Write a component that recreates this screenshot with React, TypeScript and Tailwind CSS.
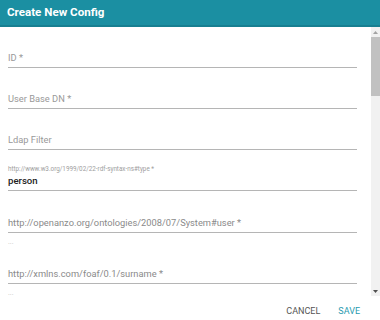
import React from 'react';

const ScrollBar: React.FC = () => (
  <div className="w-[9px] flex flex-col bg-[#f1f1f1]">
    <div className="h-[10px] flex items-center justify-center bg-[#f1f1f1]">
      <svg width="5" height="3" viewBox="0 0 5 3">
        <path d="M0 3 L2.5 0 L5 3 Z" fill="#a3a3a3" />
      </svg>
    </div>
    <div className="h-[59px] bg-[#c1c1c1]" />
    <div className="flex-1" />
    <div className="h-[10px] flex items-center justify-center">
      <svg width="5" height="3" viewBox="0 0 5 3">
        <path d="M0 0 L2.5 3 L5 0 Z" fill="#505050" />
      </svg>
    </div>
  </div>
);

const App: React.FC = () => {
  return (
    <div className="w-[380px] h-[320px] bg-white flex flex-col overflow-hidden font-['Roboto',sans-serif]">
      {/* Dialog header */}
      <div className="h-[27px] shrink-0 bg-[#1b8fa2] border-b-2 border-[#177f91] px-[7px] flex items-center">
        <h1 className="text-[11.6px] font-bold text-white leading-none">Create New Config</h1>
      </div>

      {/* Form body */}
      <div className="flex flex-1 min-h-0">
        <div className="flex-1 overflow-hidden pl-[8px] pr-[14px] text-[9.3px]">
          <div className="h-[41px] flex items-end pb-[2px] border-b border-[#b5b5b5]">
            <span className="leading-[14px] text-[#999999]">ID *</span>
          </div>
          <div className="h-[41px] flex items-end pb-[2px] border-b border-[#b5b5b5]">
            <span className="leading-[14px] text-[#999999]">User Base DN *</span>
          </div>
          <div className="h-[41px] flex items-end pb-[2px] border-b border-[#b5b5b5]">
            <span className="leading-[14px] text-[#999999]">Ldap Filter</span>
          </div>
          <div className="h-[41px] flex flex-col justify-end pb-[2px] border-b border-[#b5b5b5]">
            <span className="text-[6.3px] leading-[10px] text-[#9e9e9e]">http://www.w3.org/1999/02/22-rdf-syntax-ns#type *</span>
            <span className="text-[9.6px] leading-[14px] font-medium text-[#212121]">person</span>
          </div>
          <div className="h-[42px] flex items-end pb-[2px] border-b border-[#b5b5b5]">
            <span className="leading-[14px] text-[#8a8a8a]">http://openanzo.org/ontologies/2008/07/System#user *</span>
          </div>
          <div className="h-[18px] leading-[18px] text-[7px] text-[#c4c4c4]">...</div>
          <div className="h-[33px] flex items-end pb-[2px] border-b border-[#b5b5b5]">
            <span className="leading-[14px] text-[#8a8a8a]">http://xmlns.com/foaf/0.1/surname *</span>
          </div>
          <div className="h-[18px] leading-[18px] text-[7px] text-[#c4c4c4]">...</div>
        </div>
        <ScrollBar />
      </div>

      {/* Actions */}
      <div className="h-[24px] shrink-0 flex justify-end items-start pt-[8px] pr-[20px] gap-[18px] text-[9px]">
        <button className="leading-[14px] uppercase text-[#555555]">Cancel</button>
        <button className="leading-[14px] uppercase text-[#2a9bb0]">Save</button>
      </div>
    </div>
  );
};

export default App;
